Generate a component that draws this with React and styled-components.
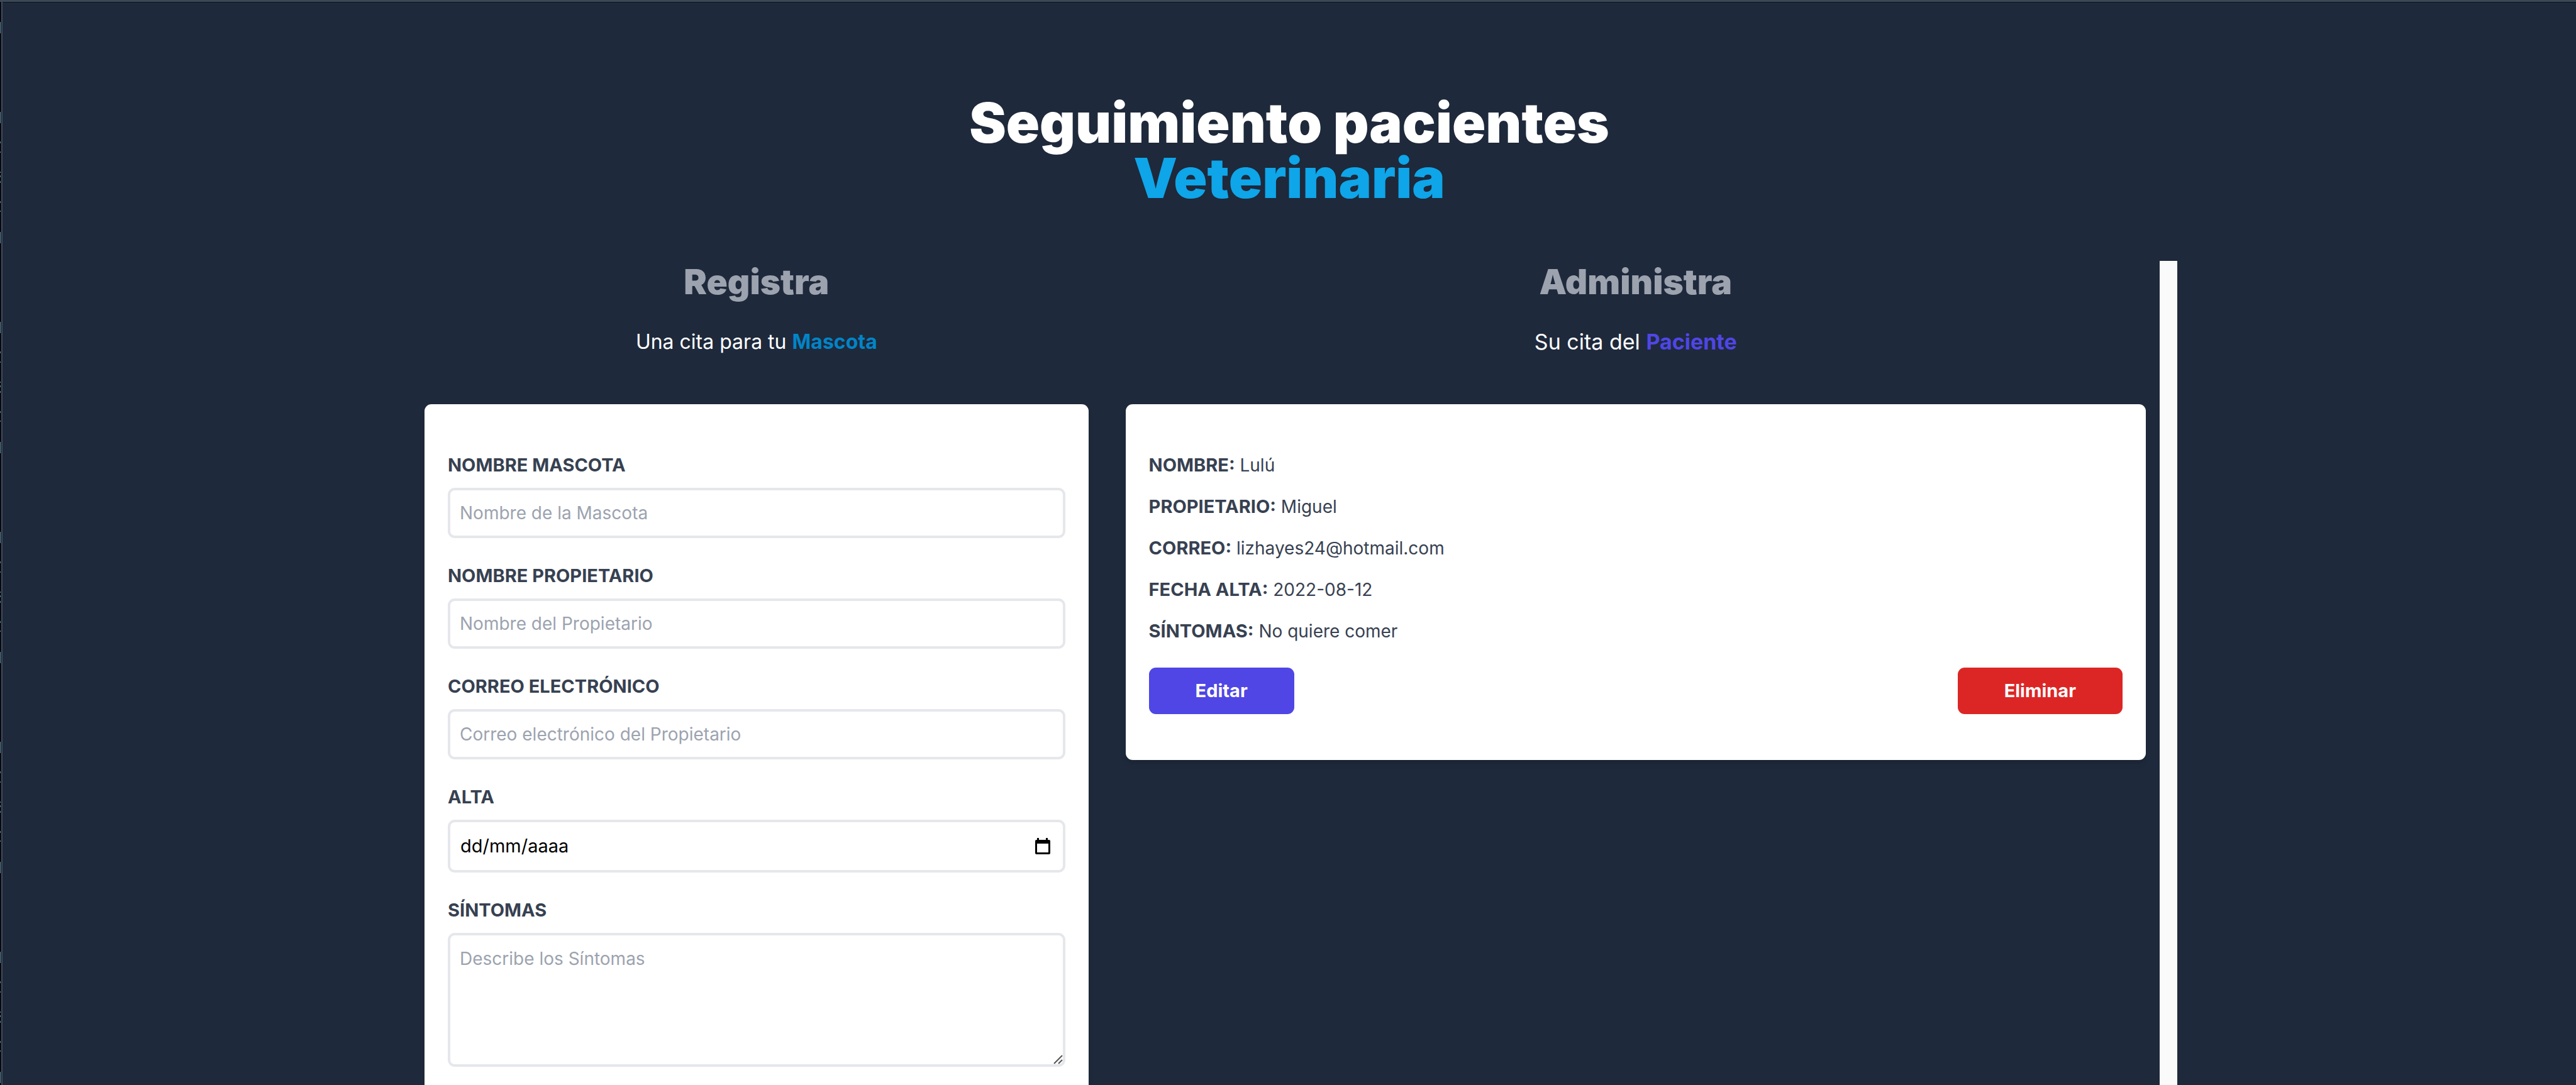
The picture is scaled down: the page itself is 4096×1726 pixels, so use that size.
import React from "react";
import styled, { createGlobalStyle } from "styled-components";

const GlobalStyle = createGlobalStyle`
  *, *::before, *::after { box-sizing: border-box; }
  html, body { margin: 0; padding: 0; }
  body {
    background: #1e293b;
    color: #000;
    font-family: Inter, "Liberation Sans", sans-serif;
    font-size: 29px;
    line-height: 44px;
  }
  h1, h2, p { margin: 0; }
  input, textarea, button { font: inherit; color: inherit; }
`;

/* The left edge shows a sliver of the window behind, then the frame line. */
const Page = styled.div`
  height: 100vh;
  overflow: hidden;
  border-top: 3px solid #3b4856;
  padding: 148px 0 0 4px;
  background:
    linear-gradient(#0c1219, #0c1219) 4px 0 / 100% 1px no-repeat,
    linear-gradient(
      #5f8fab 0 18px, transparent 18px 47px,
      #5f8fab 47px 50px, transparent 50px 63px,
      #5f8fab 63px 65px, transparent 65px 95px,
      #5f8fab 95px 97px, transparent 97px 101px,
      #5f8fab 101px 104px, transparent 104px 110px,
      #5f8fab 110px 113px, transparent 113px 142px,
      #5f8fab 142px 145px, transparent 145px 157px,
      #5f8fab 157px 159px, transparent 159px 191px,
      #5f8fab 191px 209px, transparent 209px
    ) 0 175px / 1px 334px repeat-y,
    linear-gradient(90deg, #07090c 0 2px, #414d5c 2px 4px, #1e293b 4px);
`;

const Container = styled.div`
  max-width: 2824px;
  margin: 0 auto;
`;

const Title = styled.h1`
  color: #fff;
  font-size: 88px;
  line-height: 88px;
  font-weight: 900;
  text-align: center;
  span { display: block; color: #0ea5e9; }
`;

const Columns = styled.main`
  display: grid;
  grid-template-columns: 2fr 3fr;
  margin-top: 88px;
`;

const FormColumn = styled.section`
  padding: 0 37px;
`;

const ListColumn = styled.section`
  height: 100vh;
  padding: 0 22px;
  border-right: 28px solid #fafafa;
`;

const Heading = styled.h2`
  color: #9ca3af;
  font-size: 55px;
  line-height: 66px;
  font-weight: 900;
  text-align: center;
`;

const Lead = styled.p`
  margin: 37px 0 74px;
  color: #fff;
  font-size: ${(p) => p.$size}px;
  line-height: 51px;
  text-align: center;
  strong { color: ${(p) => p.$accent}; font-weight: 700; }
`;

const Card = styled.div`
  background: #fff;
  border-radius: 11px;
  padding: 75px 37px 73px;
  color: #374151;
  box-shadow: 0 7px 11px -2px rgba(0, 0, 0, 0.1), 0 4px 7px -4px rgba(0, 0, 0, 0.1);
`;

const Field = styled.div`
  margin-bottom: 38px;
`;

const Label = styled.label`
  display: block;
  margin-bottom: 14px;
  font-weight: 700;
  text-transform: uppercase;
`;

const Input = styled.input`
  display: block;
  width: 100%;
  height: 80px;
  padding: 0 15px;
  border: 4px solid #e5e7eb;
  border-radius: 11px;
  background: #fff;
  font-size: 28px;
  outline: none;
  &::placeholder { color: #9ca3af; opacity: 1; }
`;

const DateBox = styled.div`
  display: flex;
  align-items: center;
  height: 84px;
  padding: 0 20px 0 16px;
  border: 4px solid #e5e7eb;
  border-radius: 11px;
`;

const DateInput = styled.input`
  flex: 1;
  min-width: 0;
  padding: 0;
  border: 0;
  background: transparent;
  outline: none;
  &::placeholder { color: #000; opacity: 1; }
`;

const PickerButton = styled.button`
  display: flex;
  padding: 0;
  border: 0;
  background: transparent;
  color: #000;
`;

const TextAreaBox = styled.div`
  position: relative;
`;

const TextArea = styled.textarea`
  display: block;
  width: 100%;
  height: 213px;
  padding: 15px;
  border: 4px solid #e5e7eb;
  border-radius: 11px;
  background: #fff;
  font-size: 28px;
  outline: none;
  resize: none;
  &::placeholder { color: #9ca3af; opacity: 1; }
`;

const Grip = styled.svg`
  position: absolute;
  right: 4px;
  bottom: 4px;
  pointer-events: none;
`;

const Detail = styled.p`
  margin-bottom: 22px;
  font-size: 28px;
  strong { font-size: 29px; font-weight: 700; text-transform: uppercase; }
`;

const Actions = styled.div`
  display: flex;
  justify-content: space-between;
  margin-top: 36px;
`;

const ActionButton = styled.button`
  padding: 15px 74px;
  border: 0;
  border-radius: 11px;
  background: ${(p) => p.$color};
  color: #fff;
  font-weight: 700;
`;

const CalendarIcon = () => (
  <svg width="24" height="26" viewBox="0 0 24 26" fill="currentColor" aria-hidden="true">
    <path
      fillRule="evenodd"
      d="M3 0h3v3h11V0h3v3h2a2 2 0 0 1 2 2v19a2 2 0 0 1-2 2H2a2 2 0 0 1-2-2V5a2 2 0 0 1 2-2h1zM3 9v14h18V9z"
    />
  </svg>
);

const ResizeGrip = () => (
  <Grip width="15" height="15" viewBox="0 0 15 15" stroke="#555" strokeWidth="2" aria-hidden="true">
    <path d="M1 14 14 1M8 14l6-6" />
  </Grip>
);

const details = [
  ["Nombre", "Lulú"],
  ["Propietario", "Miguel"],
  ["Correo", "lizhayes24@hotmail.com"],
  ["Fecha alta", "2022-08-12"],
  ["Síntomas", "No quiere comer"],
];

export default function App() {
  return (
    <>
      <GlobalStyle />
      <Page>
        <Container>
          <Title>
            Seguimiento pacientes <span>Veterinaria</span>
          </Title>
          <Columns>
            <FormColumn>
              <Heading>Registra</Heading>
              <Lead $size={32} $accent="#0284c7">
                Una cita para tu <strong>Mascota</strong>
              </Lead>
              <Card as="form">
                <Field>
                  <Label htmlFor="mascota">Nombre mascota</Label>
                  <Input id="mascota" type="text" placeholder="Nombre de la Mascota" />
                </Field>
                <Field>
                  <Label htmlFor="propietario">Nombre propietario</Label>
                  <Input id="propietario" type="text" placeholder="Nombre del Propietario" />
                </Field>
                <Field>
                  <Label htmlFor="email">Correo electrónico</Label>
                  <Input id="email" type="email" placeholder="Correo electrónico del Propietario" />
                </Field>
                <Field>
                  <Label htmlFor="alta">Alta</Label>
                  <DateBox>
                    <DateInput id="alta" type="text" inputMode="numeric" placeholder="dd/mm/aaaa" />
                    <PickerButton type="button">
                      <CalendarIcon />
                    </PickerButton>
                  </DateBox>
                </Field>
                <Field>
                  <Label htmlFor="sintomas">Síntomas</Label>
                  <TextAreaBox>
                    <TextArea id="sintomas" placeholder="Describe los Síntomas" />
                    <ResizeGrip />
                  </TextAreaBox>
                </Field>
              </Card>
            </FormColumn>
            <ListColumn>
              <Heading>Administra</Heading>
              <Lead $size={34} $accent="#4f46e5">
                Su cita del <strong>Paciente</strong>
              </Lead>
              <Card as="article">
                {details.map(([name, value]) => (
                  <Detail key={name}>
                    <strong>{name}:</strong> {value}
                  </Detail>
                ))}
                <Actions>
                  <ActionButton type="button" $color="#4f46e5">Editar</ActionButton>
                  <ActionButton type="button" $color="#dc2626">Eliminar</ActionButton>
                </Actions>
              </Card>
            </ListColumn>
          </Columns>
        </Container>
      </Page>
    </>
  );
}
